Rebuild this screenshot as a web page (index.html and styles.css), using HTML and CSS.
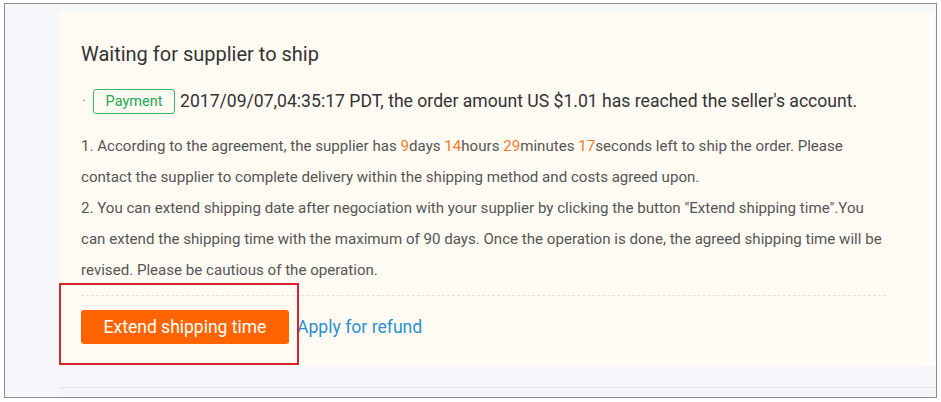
FILE: index.html
```html
<!DOCTYPE html>
<html>
<head>
<meta charset="utf-8">
<link rel="stylesheet" href="styles.css">
</head>
<body>
<div class="frame">
  <div class="main">
    <div class="card">
      <h2 class="title">Waiting for supplier to ship</h2>
      <div class="status">
        <span class="dot">·</span>
        <span class="badge">Payment</span>
        <span class="status-text">2017/09/07,04:35:17 PDT, the order amount US $1.01 has reached the seller's account.</span>
      </div>
      <div class="notes">
        <p>1. According to the agreement, the supplier has <em>9</em>days <em>14</em>hours <em>29</em>minutes <em>17</em>seconds left to ship the order. Please contact the supplier to complete delivery within the shipping method and costs agreed upon.</p>
        <p>2. You can extend shipping date after negociation with your supplier by clicking the button "Extend shipping time".You can extend the shipping time with the maximum of 90 days. Once the operation is done, the agreed shipping time will be revised. Please be cautious of the operation.</p>
      </div>
      <div class="actions">
        <button class="btn-extend">Extend shipping time</button>
        <a class="refund" href="#">Apply for refund</a>
        <div class="highlight"></div>
      </div>
    </div>
    <div class="next"></div>
  </div>
</div>
</body>
</html>
```
FILE: styles.css
```css
html, body {
  margin: 0;
  padding: 0;
  background: #ffffff;
}
body {
  font-family: Roboto, "Liberation Sans", Arial, sans-serif;
  color: #333;
}
.frame {
  margin: 3px 0 0 4px;
  width: 931px;
  height: 393px;
  border: 1px solid #8c8c8c;
  background: #f6f7fb;
  overflow: hidden;
}
.main {
  margin-left: 54px;
  padding-top: 8px;
  background: #f6f7fb;
}
.card {
  background: #fffbf3;
  width: 868px;
  height: 354px;
  box-sizing: border-box;
  padding: 30px 0 0 22px;
  box-shadow: 8px 0 0 #fbfcfe;
}
.title {
  margin: 0;
  font-size: 20px;
  font-weight: 400;
  line-height: 24px;
  color: #333;
}
.status {
  display: flex;
  align-items: center;
  margin-top: 22px;
  height: 26px;
}
.dot {
  color: #888;
  font-size: 15px;
  width: 11px;
  margin-left: 1px;
}
.badge {
  border: 1px solid #3cb46a;
  border-radius: 3px;
  color: #22a654;
  font-size: 14.5px;
  line-height: 23px;
  margin-right: 5px;
  width: 82px;
  box-sizing: border-box;
  text-align: center;
}
.status-text {
  font-size: 17.6px;
  color: #333;
}
.notes {
  margin-top: 17px;
  width: 806px;
  font-size: 15.1px;
  line-height: 31px;
  color: #555;
}
.notes p {
  margin: 0;
}
.notes em {
  font-style: normal;
  color: #f47a2e;
}
.actions {
  position: relative;
  display: flex;
  align-items: center;
  gap: 8px;
  width: 805px;
  margin-top: 9px;
  padding-top: 14px;
  border-top: 1px dashed #e4e0d8;
}
.btn-extend {
  width: 208px;
  height: 34px;
  border: none;
  border-radius: 3px;
  background: #ff6400;
  color: #fff;
  font-family: Roboto, "Liberation Sans", Arial, sans-serif;
  font-size: 17.5px;
}
.refund {
  color: #2b90cf;
  text-decoration: none;
  font-size: 17.6px;
}
.highlight {
  position: absolute;
  left: -22px;
  top: -13px;
  width: 236px;
  height: 78px;
  border: 2px solid #d9232e;
}
.next {
  margin-top: 21px;
  height: 20px;
  background: #f4f5f8;
  border-top: 1px solid #e3e5ea;
}
```
